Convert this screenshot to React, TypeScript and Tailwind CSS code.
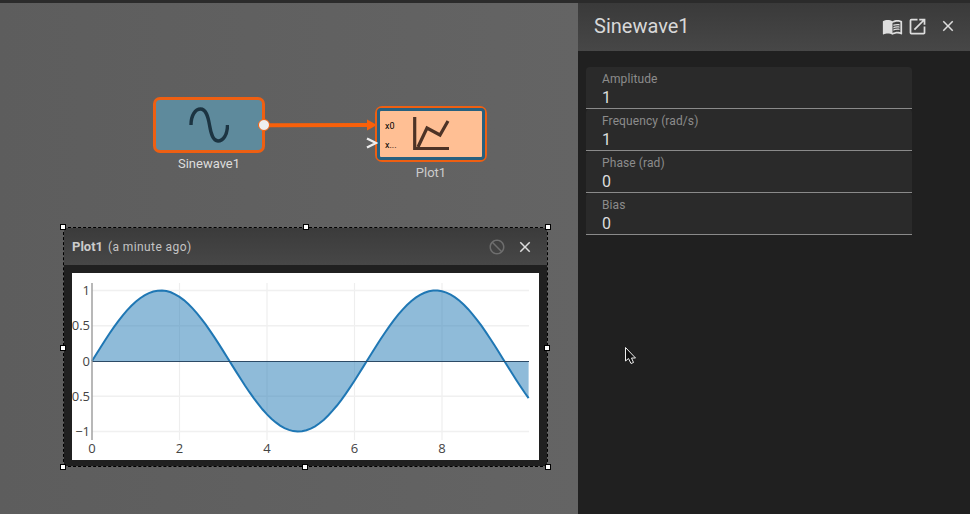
import { MdBlock, MdClose, MdMenuBook, MdOpenInNew } from 'react-icons/md';

const fields = [
  { label: 'Amplitude', value: '1' },
  { label: 'Frequency (rad/s)', value: '1' },
  { label: 'Phase (rad)', value: '0' },
  { label: 'Bias', value: '0' },
];

// plot coordinates, relative to the white chart area
const px = (x: number) => 20 + x * 43.75;
const py = (y: number) => 88 - y * 70.5;

function sinePoints() {
  const pts: string[] = [];
  for (let x = 0; x <= 9.98; x += 0.1) pts.push(`${px(x).toFixed(1)},${py(Math.sin(x)).toFixed(1)}`);
  pts.push(`${px(9.98).toFixed(1)},${py(Math.sin(9.98)).toFixed(1)}`);
  return pts;
}

function Chart() {
  const line = sinePoints();
  const fill = `${px(0)},${py(0)} ${line.join(' ')} ${px(9.98)},${py(0)}`;
  return (
    <svg width="467" height="187" viewBox="0 0 467 187" className="block bg-white">
      {[2, 4, 6, 8].map((x) => (
        <line key={x} x1={px(x)} x2={px(x)} y1="10" y2="167" stroke="#eeeeee" strokeWidth="1.2" />
      ))}
      {[1, 0.5, -0.5, -1].map((y) => (
        <line key={y} x1="20" x2="457" y1={py(y)} y2={py(y)} stroke="#f0f0f0" strokeWidth="1.5" />
      ))}
      <polygon points={fill} fill="#1f77b4" fillOpacity="0.5" />
      <polyline points={line.join(' ')} fill="none" stroke="#1f77b4" strokeWidth="2" />
      <line x1="20" x2="457" y1="88.5" y2="88.5" stroke="#2c4a66" strokeWidth="1" />
      <line x1="20" x2="20" y1="10" y2="167" stroke="#9a9a9a" strokeWidth="1.4" />
      <g fontFamily="'Open Sans', sans-serif" fontSize="13" fill="#444444">
        <text x="18" y={py(1) + 4.5} textAnchor="end">1</text>
        <text x="18" y={py(0.5) + 4.5} textAnchor="end">0.5</text>
        <text x="18" y={py(0) + 4.5} textAnchor="end">0</text>
        <text x="18" y={py(-0.5) + 4.5} textAnchor="end">0.5</text>
        <text x="18" y={py(-1) + 4.5} textAnchor="end">−1</text>
        {[0, 2, 4, 6, 8].map((x) => (
          <text key={x} x={px(x)} y="180" textAnchor="middle">{x}</text>
        ))}
      </g>
    </svg>
  );
}

function Handle({ className }: { className: string }) {
  return <div className={`absolute w-[6px] h-[6px] bg-white border border-black ${className}`} />;
}

export default function App() {
  return (
    <div className="w-[970px] h-[514px] overflow-hidden flex flex-col bg-[#2a2a2a] font-['Roboto',sans-serif]">
      <div className="h-[3px] bg-[#2b2b2b]" />
      <div className="flex flex-1">
        {/* canvas */}
        <div className="relative w-[578px] bg-gradient-to-r from-[#5d5d5d] to-[#646464]">
          <div className="absolute left-[153px] top-[94px] w-[112px] h-[56px] rounded-[7px] border-[3px] border-[#ee5f12] bg-[#5e8a9c] flex items-center justify-center">
            <svg width="40" height="40" viewBox="0 0 40 40" fill="none">
              <path d="M2 20C2 10 6.5 4 11.5 4C17 4 19 11 20.5 20C22 29 24 36 29 36C34 36 38.5 30 38.5 20" stroke="#1c3442" strokeWidth="3.4" />
            </svg>
          </div>
          <div className="absolute left-[153px] top-[153px] w-[112px] text-center text-[13px] leading-[16px] text-[#dddddd]">Sinewave1</div>

          {/* edge */}
          <svg className="absolute left-[255px] top-[110px]" width="125" height="24" viewBox="0 0 125 24" fill="none">
            <path d="M14 12.3L113 12" stroke="#f8600a" strokeWidth="4" />
            <path d="M112 6.5L122 12L112 17.5Z" fill="#f8600a" />
            <circle cx="9" cy="12" r="5.5" fill="#eeeeee" stroke="#f8600a" strokeWidth="1" />
          </svg>

          <div className="absolute left-[375px] top-[103px] w-[112px] h-[56px] rounded-[7px] border-[2px] border-[#ee5f12]">
            <div className="w-full h-full rounded-[4px] border-[3px] border-[#27607f] bg-[#ffbf94] relative">
              <span className="absolute left-[5px] top-[10px] text-[9px] leading-[10px] text-black">x0</span>
              <span className="absolute left-[5px] top-[29px] text-[9px] leading-[10px] text-black">x...</span>
              <svg className="absolute left-[31px] top-[4px]" width="40" height="38" viewBox="0 0 40 38" fill="none">
                <path d="M3.7 2V33.5H38M7 32L16 13L29 20L37 6" stroke="#4d3326" strokeWidth="3.2" />
              </svg>
            </div>
          </div>
          <svg className="absolute left-[366px] top-[134px]" width="12" height="12" viewBox="0 0 12 12" fill="none">
            <path d="M1 1.5L10 6L1 10.5" stroke="#eeeeee" strokeWidth="2.4" />
          </svg>
          <div className="absolute left-[375px] top-[162px] w-[112px] text-center text-[13px] leading-[16px] text-[#cccccc]">Plot1</div>

          {/* plot window */}
          <div className="absolute left-[63px] top-[224px] w-[485px] h-[240px] border border-dashed border-black flex flex-col">
            <div className="h-[37px] shrink-0 flex items-center pl-[8px] pr-[13px] bg-gradient-to-b from-[#3b3b3b] to-[#474747]">
              <span className="text-[13px] font-bold text-[#cccccc]">Plot1</span>
              <span className="text-[12px] text-[#c4c4c4] ml-[5px] tracking-[0.4px]">(a minute ago)</span>
              <MdBlock className="ml-auto text-[#6e6e6e] -scale-x-100" size={18} />
              <MdClose className="ml-[10px] text-[#dddddd]" size={18} />
            </div>
            <div className="flex-1 bg-[#202020] pt-[8px] pl-[8px]">
              <Chart />
            </div>
            <Handle className="left-[-4px] top-[-4px]" />
            <Handle className="left-[239px] top-[-4px]" />
            <Handle className="right-[-4px] top-[-4px]" />
            <Handle className="left-[-4px] top-[117px]" />
            <Handle className="right-[-3px] top-[117px]" />
            <Handle className="left-[-4px] bottom-[-4px]" />
            <Handle className="left-[238px] bottom-[-4px]" />
            <Handle className="right-[-4px] bottom-[-4px]" />
          </div>
        </div>

        {/* inspector */}
        <div className="relative w-[392px] flex flex-col bg-[#202020]">
          <div className="h-[48px] shrink-0 flex items-center pl-[16px] pr-[13px] pb-[2px] bg-gradient-to-b from-[#3a3a3a] to-[#474747]">
            <span className="text-[20px] text-[#d8d8d8]">Sinewave1</span>
            <MdMenuBook className="ml-auto text-[#dddddd]" size={21} />
            <MdOpenInNew className="ml-[4px] text-[#dddddd]" size={21} />
            <MdClose className="ml-[11px] text-[#dddddd]" size={18} />
          </div>
          <div className="pt-[16px] pl-[8px] w-[334px] flex flex-col">
            {fields.map((f) => (
              <div key={f.label} className="h-[42px] rounded-t-[4px] bg-[#2a2a2a] border-b border-[#8a8a8a] pl-[16px] pt-[5px]">
                <div className="text-[12px] leading-[14px] tracking-[0.1px] text-[#8c8c8c]">{f.label}</div>
                <div className="mt-[2px] text-[16px] leading-[20px] text-[#dddddd]">{f.value}</div>
              </div>
            ))}
          </div>
          <svg className="absolute left-[46px] top-[343px]" width="14" height="20" viewBox="0 0 14 20" fill="none">
            <path d="M1.5 1.5V15L4.5 12.5L7 17.5L9.5 16.5L7.5 12H11.5Z" fill="#111111" stroke="#eeeeee" strokeWidth="1" />
          </svg>
        </div>
      </div>
    </div>
  );
}
